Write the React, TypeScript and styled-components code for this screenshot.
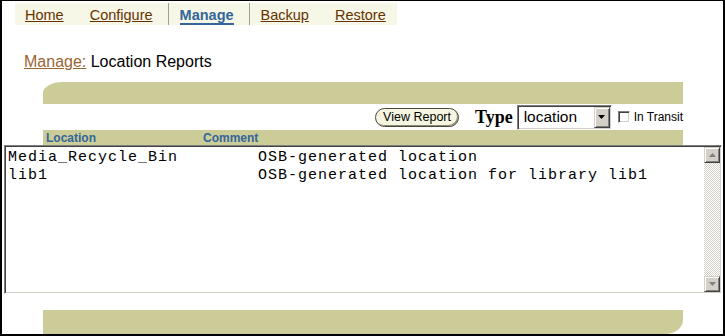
import React from "react";
import styled, { createGlobalStyle } from "styled-components";

const GlobalStyle = createGlobalStyle`
  html, body {
    margin: 0;
    padding: 0;
    background: #fff;
  }
  body {
    font-family: "Liberation Sans", Arial, sans-serif;
  }
`;

const Frame = styled.div`
  box-sizing: border-box;
  width: 725px;
  height: 336px;
  border-style: solid;
  border-color: #000;
  border-width: 1px 2px 2px 2px;
  overflow: hidden;
  display: flex;
  flex-direction: column;
  background: #fff;
`;

const TabBar = styled.nav`
  box-sizing: border-box;
  margin: 2px 0 0 13px;
  width: 382px;
  height: 22px;
  padding: 0 11px 0 10px;
  display: flex;
  align-items: stretch;
  gap: 26px;
  background: #f7f7e7;
`;

const Tab = styled.a<{ $active?: boolean }>`
  box-sizing: border-box;
  padding-top: 4px;
  line-height: 16px;
  font-size: 14.5px;
  cursor: pointer;
  color: ${(p) => (p.$active ? "#336699" : "#663300")};
  font-weight: ${(p) => (p.$active ? "bold" : "normal")};
  text-decoration: ${(p) => (p.$active ? "none" : "underline")};
  border-bottom: ${(p) => (p.$active ? "2px solid #336699" : "none")};
  align-self: ${(p) => (p.$active ? "flex-start" : "stretch")};
`;

const TabSeparator = styled.span`
  width: 1px;
  background: #a0a0a0;
  margin: 0 -15px 0 -11px;
`;

const Breadcrumb = styled.div`
  margin: 27px 0 0 22px;
  font-size: 16px;
  line-height: 19px;
  color: #000;
`;

const CrumbLink = styled.a`
  color: #996633;
  text-decoration: underline;
`;

const Band = styled.div<{ $corner: "top" | "bottom" }>`
  margin-left: 41px;
  width: 640px;
  height: ${(p) => (p.$corner === "top" ? "22px" : "24px")};
  background: #cccc99;
  border-top-left-radius: ${(p) => (p.$corner === "top" ? "20px 11px" : "0")};
  border-bottom-right-radius: ${(p) => (p.$corner === "bottom" ? "18px 14px" : "0")};
`;

const TopBand = styled(Band)`
  margin-top: 11px;
`;

const BottomBand = styled(Band)`
  margin-top: 16px;
`;

const ControlsRow = styled.div`
  margin-left: 41px;
  width: 640px;
  height: 26px;
  display: flex;
  align-items: center;
  justify-content: flex-end;
`;

const PillButton = styled.button`
  box-sizing: border-box;
  height: 19px;
  padding: 0 7px;
  margin-right: 16px;
  border: 1px solid #4a4a3a;
  border-radius: 10px;
  background: #f5f5e1;
  box-shadow: inset -1px -1px #8a8a76;
  font-family: "Liberation Sans", Arial, sans-serif;
  font-size: 12.5px;
  line-height: 16px;
  color: #000;
`;

const TypeLabel = styled.span`
  font-family: "Liberation Serif", "Times New Roman", serif;
  font-weight: bold;
  font-size: 18px;
  margin-right: 4px;
`;

const SelectBox = styled.div`
  box-sizing: border-box;
  width: 95px;
  height: 25px;
  display: flex;
  align-items: center;
  background: #fff;
  border: 1px solid;
  border-color: #808080 #fff #fff #808080;
  box-shadow: inset 1px 1px #404040, inset -1px -1px #d4d0c8;
  padding: 1px;
`;

const SelectValue = styled.span`
  flex: 1;
  padding-left: 5px;
  font-size: 15.5px;
  color: #000;
`;

const ClassicButton = styled.div`
  box-sizing: border-box;
  width: 16px;
  height: 16px;
  display: flex;
  align-items: center;
  justify-content: center;
  background: #d4d0c8;
  border: 1px solid;
  border-color: #d4d0c8 #404040 #404040 #d4d0c8;
  box-shadow: inset 1px 1px #fff, inset -1px -1px #808080;
`;

const DropButton = styled(ClassicButton)`
  height: 21px;
`;

const Checkbox = styled.span`
  box-sizing: border-box;
  width: 12px;
  height: 12px;
  margin-left: 6px;
  background: #fff;
  border: 1px solid;
  border-color: #808080 #fff #fff #808080;
  box-shadow: inset 1px 1px #404040, inset -1px -1px #d4d0c8;
`;

const CheckLabel = styled.span`
  margin-left: 4px;
  font-size: 12px;
  color: #000;
`;

const HeaderBand = styled.div`
  box-sizing: border-box;
  margin-left: 41px;
  width: 640px;
  height: 15px;
  padding-left: 3px;
  display: grid;
  grid-template-columns: 157px 1fr;
  align-items: center;
  background: #cccc99;
  color: #336699;
  font-weight: bold;
  font-size: 12px;
`;

const ListBox = styled.div`
  box-sizing: border-box;
  margin-left: 2px;
  width: 718px;
  height: 149px;
  display: flex;
  background: #fff;
  border: 1px solid;
  border-color: #808080 #fff #fff #808080;
  box-shadow: inset 1px 1px #404040, inset -1px -1px #d4d0c8;
  padding: 1px;
`;

const ListText = styled.pre`
  flex: 1;
  margin: 0;
  padding: 2px 2px;
  font-family: "Liberation Mono", "Courier New", monospace;
  font-size: 15px;
  letter-spacing: 1px;
  line-height: 18px;
  color: #000;
`;

const Scrollbar = styled.div`
  width: 16px;
  display: flex;
  flex-direction: column;
`;

const ScrollTrack = styled.div`
  flex: 1;
  background-image: repeating-conic-gradient(#d4d0c8 0 25%, #fff 0 50%);
  background-size: 2px 2px;
`;

const Arrow: React.FC<{ dir: "up" | "down"; color: string }> = ({ dir, color }) => (
  <svg width="7" height="4" viewBox="0 0 7 4">
    <polygon
      points={dir === "up" ? "3.5,0 7,4 0,4" : "0,0 7,0 3.5,4"}
      fill={color}
    />
  </svg>
);

const rows = [
  ["Media_Recycle_Bin", "OSB-generated location"],
  ["lib1", "OSB-generated location for library lib1"],
];

const App: React.FC = () => {
  const text = rows.map(([loc, comment]) => loc.padEnd(25, " ") + comment).join("\n");

  return (
    <>
      <GlobalStyle />
      <Frame>
        <TabBar>
          <Tab>Home</Tab>
          <Tab>Configure</Tab>
          <TabSeparator />
          <Tab $active>Manage</Tab>
          <TabSeparator />
          <Tab>Backup</Tab>
          <Tab>Restore</Tab>
        </TabBar>

        <Breadcrumb>
          <CrumbLink>Manage:</CrumbLink> Location Reports
        </Breadcrumb>

        <TopBand $corner="top" />

        <ControlsRow>
          <PillButton>View Report</PillButton>
          <TypeLabel>Type</TypeLabel>
          <SelectBox>
            <SelectValue>location</SelectValue>
            <DropButton>
              <Arrow dir="down" color="#000" />
            </DropButton>
          </SelectBox>
          <Checkbox />
          <CheckLabel>In Transit</CheckLabel>
        </ControlsRow>

        <HeaderBand>
          <span>Location</span>
          <span>Comment</span>
        </HeaderBand>

        <ListBox>
          <ListText>{text}</ListText>
          <Scrollbar>
            <ClassicButton>
              <Arrow dir="up" color="#808080" />
            </ClassicButton>
            <ScrollTrack />
            <ClassicButton>
              <Arrow dir="down" color="#808080" />
            </ClassicButton>
          </Scrollbar>
        </ListBox>

        <BottomBand $corner="bottom" />
      </Frame>
    </>
  );
};

export default App;
